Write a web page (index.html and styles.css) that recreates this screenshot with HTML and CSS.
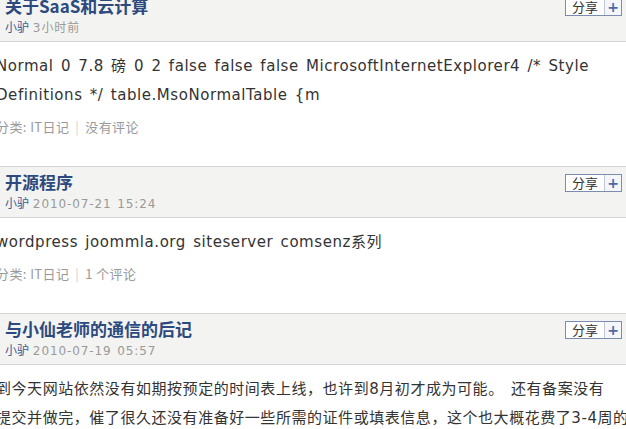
FILE: index.html
```html
<!DOCTYPE html>
<html>
<head>
<meta charset="utf-8">
<link rel="stylesheet" href="styles.css">
</head>
<body>
<div class="list">
  <div class="post">
    <div class="head">
      <div class="info">
        <div class="title">关于SaaS和云计算</div>
        <div class="byline"><span class="author">小驴</span> <span class="time">3小时前</span></div>
      </div>
      <div class="share"><span class="share-label">分享</span><span class="share-plus">+</span></div>
    </div>
    <div class="body">
      <p class="text">Normal 0 7.8 磅 0 2 false false false MicrosoftInternetExplorer4 /* Style<br>Definitions */ table.MsoNormalTable {m</p>
      <div class="meta">分类: IT日记<span class="sep">|</span>没有评论</div>
    </div>
  </div>
  <div class="post">
    <div class="head">
      <div class="info">
        <div class="title">开源程序</div>
        <div class="byline"><span class="author">小驴</span> <span class="time">2010-07-21 15:24</span></div>
      </div>
      <div class="share"><span class="share-label">分享</span><span class="share-plus">+</span></div>
    </div>
    <div class="body">
      <p class="text">wordpress joommla.org siteserver comsenz系列</p>
      <div class="meta">分类: IT日记<span class="sep">|</span>1 个评论</div>
    </div>
  </div>
  <div class="post">
    <div class="head">
      <div class="info">
        <div class="title">与小仙老师的通信的后记</div>
        <div class="byline"><span class="author">小驴</span> <span class="time">2010-07-19 05:57</span></div>
      </div>
      <div class="share"><span class="share-label">分享</span><span class="share-plus">+</span></div>
    </div>
    <div class="body">
      <p class="text">到今天网站依然没有如期按预定的时间表上线，也许到8月初才成为可能。 还有备案没有<br>提交并做完，催了很久还没有准备好一些所需的证件或填表信息，这个也大概花费了3-4周的时间。</p>
    </div>
  </div>
</div>
</body>
</html>
```
FILE: styles.css
```css
html, body {
  margin: 0;
  padding: 0;
  background: #ffffff;
  overflow: hidden;
}
body {
  width: 626px;
  height: 429px;
  font-family: "DejaVu Sans", "Noto Sans CJK SC", sans-serif;
}
.list {
  margin-top: -10px;
  margin-left: -12px;
  width: 638px;
}
.post {
  margin-bottom: 30px;
}
.head {
  display: flex;
  justify-content: space-between;
  align-items: flex-start;
  background: #f3f3f1;
  border-top: 1px solid #d4d4d4;
  border-bottom: 1px solid #d4d4d4;
  padding: 4px 4px 0 17px;
  height: 46px;
  box-sizing: content-box;
}
.title {
  font-family: "Noto Sans CJK SC", sans-serif;
  font-weight: bold;
  font-size: 17px;
  line-height: 22px;
  color: #2c4a7e;
}
.byline {
  font-size: 12px;
  line-height: 18px;
  margin-top: 1px;
  white-space: nowrap;
}
.author {
  font-family: "Noto Sans CJK SC", sans-serif;
  color: #3d5d94;
}
.time {
  color: #9a9a9a;
  letter-spacing: 0.9px;
  word-spacing: 1px;
}
.share {
  display: flex;
  margin-top: 3px;
  border: 1px solid #7a8cb0;
  background: #ffffff;
  height: 16px;
}
.share-label {
  font-family: "Noto Sans CJK SC", sans-serif;
  font-size: 13px;
  line-height: 16px;
  color: #333333;
  padding: 0 6px 0 6px;
  border-right: 1px solid #c0c8d8;
}
.share-plus {
  width: 16px;
  text-align: center;
  font-family: "DejaVu Sans", sans-serif;
  font-weight: bold;
  font-size: 14px;
  line-height: 16px;
  color: #4a6aa8;
  background: #f4f6fa;
}
.body {
  padding: 10px 0 0 8px;
}
.text {
  margin: 0;
  font-size: 15px;
  line-height: 29px;
  letter-spacing: 0.55px;
  word-spacing: 2px;
  color: #333333;
  white-space: nowrap;
}
.meta {
  margin-top: 8px;
  font-family: "Noto Sans CJK SC", sans-serif;
  font-size: 13px;
  line-height: 18px;
  letter-spacing: 0.4px;
  color: #999999;
}
.sep {
  color: #d0d0d0;
  margin: 0 6px;
}
```
